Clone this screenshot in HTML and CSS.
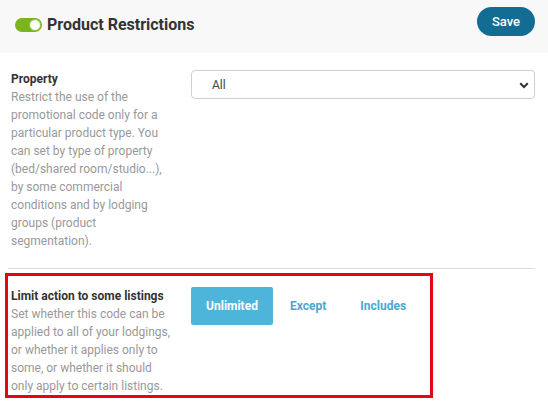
FILE: index.html
```html
<!DOCTYPE html>
<html>
<head>
<meta charset="utf-8">
<link rel="stylesheet" href="styles.css">
</head>
<body>
<header class="header">
  <div class="title-wrap">
    <span class="toggle"><span class="knob"></span></span>
    <h1 class="title">Product Restrictions</h1>
  </div>
  <button class="save">Save</button>
</header>
<main class="main">
  <section class="row">
    <div class="info">
      <div class="label">Property</div>
      <div class="desc">Restrict the use of the promotional code only for a particular product type. You can set by type of property (bed/shared room/studio...), by some commercial conditions and by lodging groups (product segmentation).</div>
    </div>
    <div class="select">
      <span class="select-value">All</span>
      <svg class="chev" width="10" height="7" viewBox="0 0 10 7"><path d="M1.2 1.3 L5 5 L8.8 1.3" fill="none" stroke="#333" stroke-width="2"/></svg>
    </div>
  </section>
  <hr class="divider">
  <section class="row box">
    <div class="info">
      <div class="label">Limit action to some listings</div>
      <div class="desc">Set whether this code can be applied to all of your lodgings, or whether it applies only to some, or whether it should only apply to certain listings.</div>
    </div>
    <div class="tabs">
      <button class="tab active">Unlimited</button>
      <button class="tab">Except</button>
      <button class="tab">Includes</button>
    </div>
  </section>
</main>
</body>
</html>
```
FILE: styles.css
```css
* { box-sizing: border-box; }
body {
  margin: 0;
  background: #fff;
  font-family: Roboto, "Liberation Sans", Arial, sans-serif;
  color: #333;
}
.header {
  height: 53px;
  background: #f8f8f8;
  display: flex;
  align-items: center;
  justify-content: space-between;
  padding: 0 13px 0 15px;
}
.title-wrap {
  display: flex;
  align-items: center;
  gap: 5px;
  margin-top: -4px;
}
.toggle {
  position: relative;
  width: 27px;
  height: 14px;
  border-radius: 7px;
  background: #7ab51d;
  display: inline-block;
}
.knob {
  position: absolute;
  right: 1px;
  top: 1px;
  width: 12px;
  height: 12px;
  border-radius: 50%;
  background: #fff;
  border: 1px solid #8cc43a;
}
.title {
  margin: 0;
  font-size: 16px;
  font-weight: 700;
  color: #333;
  line-height: 20px;
}
.save {
  width: 58px;
  height: 29px;
  border: none;
  border-radius: 15px;
  background: #136c93;
  color: #fff;
  font-family: Roboto, "Liberation Sans", Arial, sans-serif;
  font-size: 13px;
  font-weight: 500;
  margin-top: -10px;
  padding: 0;
}
.main {
  padding: 17px 13px 0 8px;
}
.row {
  display: grid;
  grid-template-columns: 183px 1fr;
  align-items: start;
}
.info {
  padding-left: 3px;
  padding-right: 18px;
}
.label {
  font-size: 12px;
  font-weight: 700;
  line-height: 18px;
  color: #333;
}
.desc {
  font-size: 12px;
  line-height: 18px;
  color: #999;
}
.select {
  height: 29px;
  border: 1px solid #cfcfcf;
  border-radius: 4px;
  display: flex;
  align-items: center;
  justify-content: space-between;
  padding: 0 5px 0 20px;
  background: #fff;
}
.select-value {
  font-size: 12px;
  color: #444;
}
.chev { display: block; margin-top: 1px; }
.divider {
  border: none;
  border-top: 1px solid #dcdcdc;
  margin: 18px 0 4px 0;
}
.box {
  border: 3px solid #e30613;
  margin-left: -3px;
  width: 428px;
  padding: 11px 0 0 3px;
  grid-template-columns: 180px 1fr;
}
.box .info { padding-left: 0; }
.tabs {
  display: flex;
}
.tab {
  height: 38px;
  border: none;
  background: transparent;
  padding: 0 17px;
  font-family: Roboto, "Liberation Sans", Arial, sans-serif;
  font-size: 12px;
  font-weight: 700;
  color: #4aa8cf;
}
.tab.active {
  width: 82px;
  padding: 0;
  background: #4db5da;
  color: #fff;
  border-radius: 2px;
}
```
